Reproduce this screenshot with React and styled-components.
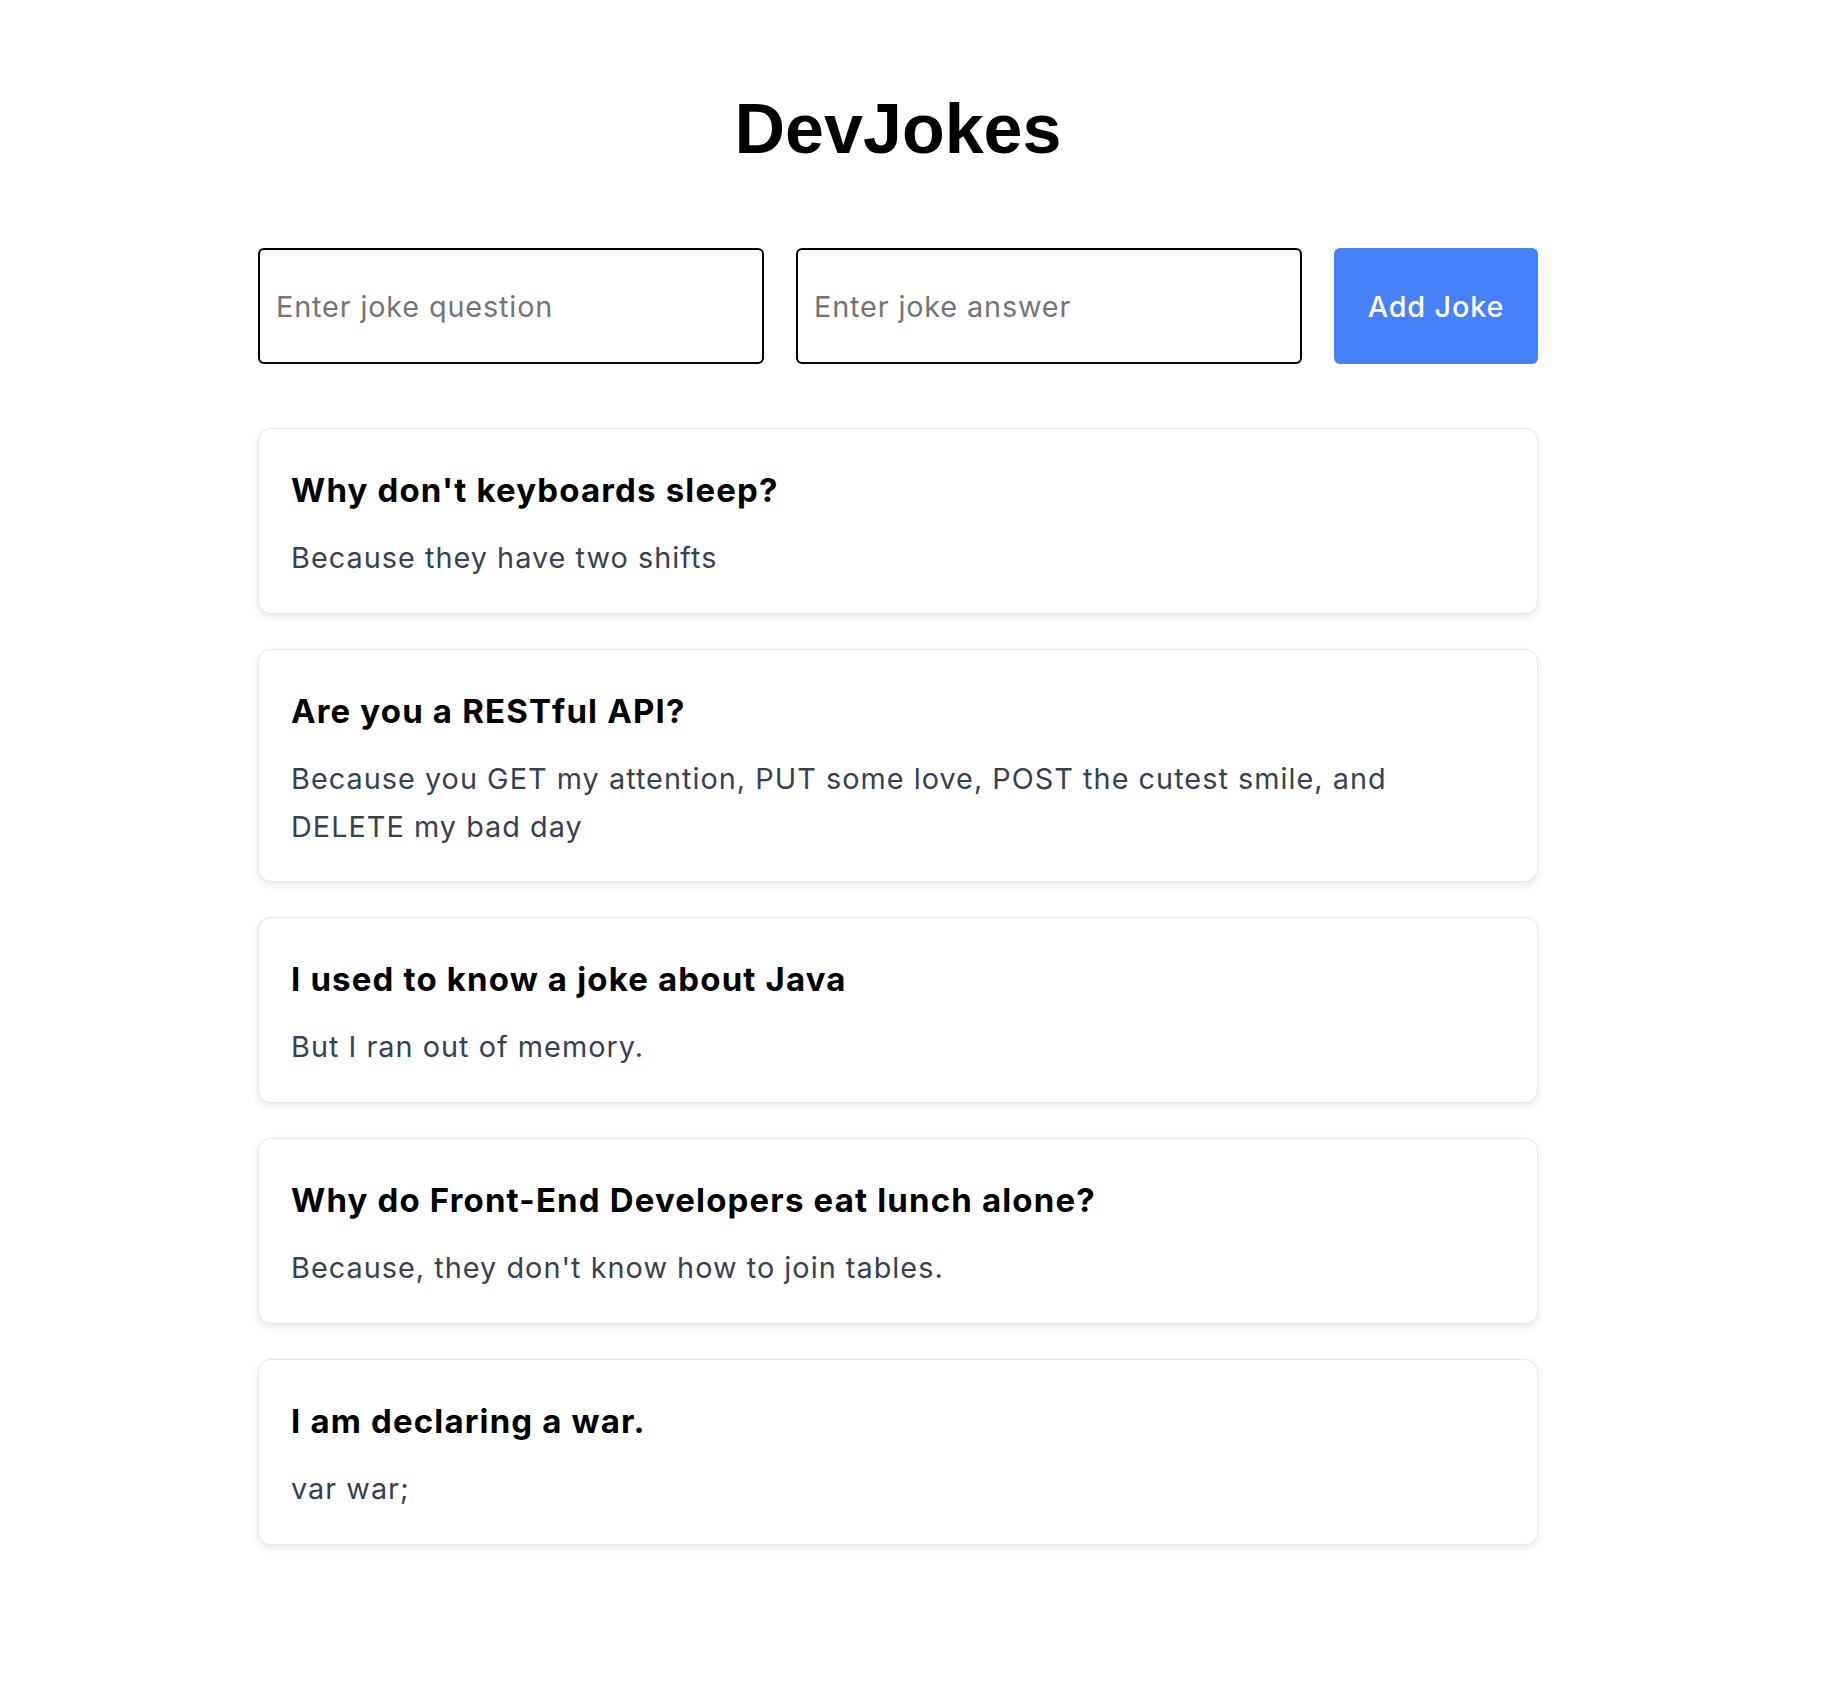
import React, { useState } from "react";
import styled, { createGlobalStyle } from "styled-components";

const GlobalStyle = createGlobalStyle`
  * {
    box-sizing: border-box;
  }
  body {
    margin: 0;
    background: #ffffff;
    font-family: Inter, "Noto Sans", sans-serif;
  }
`;

const initialJokes = [
  {
    question: "Why don't keyboards sleep?",
    answer: "Because they have two shifts",
  },
  {
    question: "Are you a RESTful API?",
    answer:
      "Because you GET my attention, PUT some love, POST the cutest smile, and DELETE my bad day",
  },
  {
    question: "I used to know a joke about Java",
    answer: "But I ran out of memory.",
  },
  {
    question: "Why do Front-End Developers eat lunch alone?",
    answer: "Because, they don't know how to join tables.",
  },
  {
    question: "I am declaring a war.",
    answer: "var war;",
  },
];

const App = () => {
  const [jokes, setJokes] = useState(initialJokes);
  const [question, setQuestion] = useState("");
  const [answer, setAnswer] = useState("");

  const handleAdd = () => {
    if (!question.trim() || !answer.trim()) return;
    setJokes((list) => [...list, { question, answer }]);
    setQuestion("");
    setAnswer("");
  };

  return (
    <StyledPage>
      <GlobalStyle />
      <StyledContainer>
        <Title>DevJokes</Title>

        <StyledForm
          onSubmit={(e) => {
            e.preventDefault();
            handleAdd();
          }}
        >
          <Input
            placeholder="Enter joke question"
            value={question}
            onChange={(e) => setQuestion(e.target.value)}
          />
          <Input
            placeholder="Enter joke answer"
            value={answer}
            onChange={(e) => setAnswer(e.target.value)}
          />
          <AddButton type="submit">Add Joke</AddButton>
        </StyledForm>

        <StyledList>
          {jokes.map((joke, index) => (
            <JokeCard key={index}>
              <h3>{joke.question}</h3>
              <p>{joke.answer}</p>
            </JokeCard>
          ))}
        </StyledList>
      </StyledContainer>
    </StyledPage>
  );
};

export default App;

const StyledPage = styled.div`
  padding: 89px 38px 120px 0;
`;

const StyledContainer = styled.div`
  width: 1280px;
  margin: 0 auto;
`;

const Title = styled.h1`
  margin: 0 0 79px;
  text-align: center;
  font-family: "Liberation Sans", Arial, sans-serif;
  font-weight: 700;
  font-size: 70px;
  color: #000000;
`;

const StyledForm = styled.form`
  display: flex;
  gap: 32px;
  margin-bottom: 64px;
`;

const Input = styled.input`
  flex: 1;
  min-width: 0;
  height: 116px;
  padding: 0 16px;
  border: 2px solid #000000;
  border-radius: 6px;
  font-family: Inter, "Noto Sans", sans-serif;
  font-size: 28.8px;
  letter-spacing: 0.03em;
  color: #111111;
  outline: none;
  &::placeholder {
    color: #757575;
  }
`;

const AddButton = styled.button`
  width: 204px;
  height: 116px;
  border: none;
  border-radius: 6px;
  background-color: #4680fb;
  color: #ffffff;
  font-family: Inter, "Noto Sans", sans-serif;
  font-size: 28.8px;
  font-weight: 500;
  letter-spacing: 0.03em;
  cursor: pointer;
`;

const StyledList = styled.div`
  display: flex;
  flex-direction: column;
  gap: 35px;
`;

const JokeCard = styled.div`
  padding: 41px 32px 31px;
  border: 1px solid #e5e7eb;
  border-radius: 13px;
  background: #ffffff;
  box-shadow: 0 3px 8px rgba(0, 0, 0, 0.09);
  h3 {
    margin: 0 0 24px;
    font-size: 33px;
    line-height: 40px;
    font-weight: 700;
    letter-spacing: 0.035em;
    color: #000000;
  }
  p {
    margin: 0;
    font-size: 28.8px;
    line-height: 1.66;
    letter-spacing: 0.036em;
    color: #374151;
  }
`;
